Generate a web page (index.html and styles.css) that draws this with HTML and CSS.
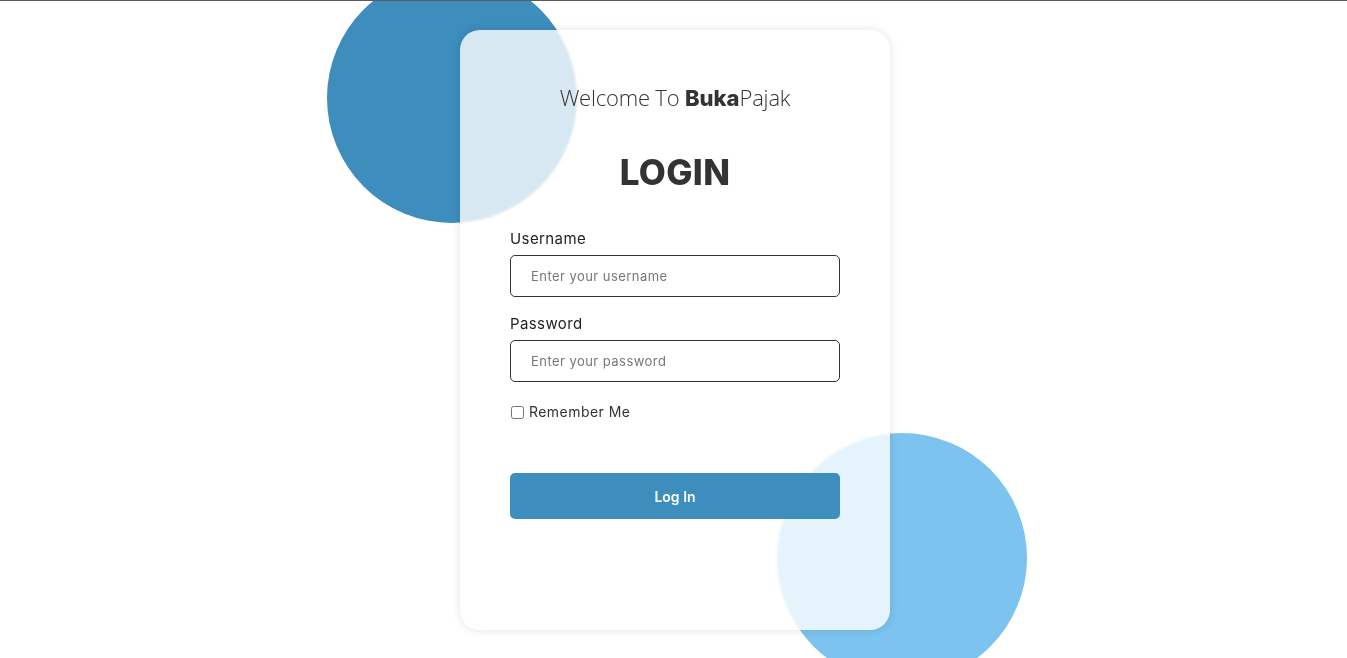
FILE: index.html
```html
<!DOCTYPE html>
<html lang="en">
<head>
<meta charset="utf-8">
<title>Login - BukaPajak</title>
<link rel="stylesheet" href="styles.css">
</head>
<body>
<main class="page">
  <div class="stage">
    <div class="circle circle-one"></div>
    <div class="circle circle-two"></div>
    <form class="card">
      <h3 class="welcome">Welcome To <span class="brand-bold">Buka</span>Pajak</h3>
      <h1 class="title">LOGIN</h1>
      <label class="label" for="username">Username</label>
      <input class="field" id="username" type="text" placeholder="Enter your username">
      <label class="label label-gap" for="password">Password</label>
      <input class="field" id="password" type="password" placeholder="Enter your password">
      <label class="remember"><input class="check" type="checkbox"> Remember Me</label>
      <button class="submit" type="button">Log In</button>
    </form>
  </div>
</main>
</body>
</html>
```
FILE: styles.css
```css
* { box-sizing: border-box; }
html, body { margin: 0; padding: 0; }
body {
  border-top: 1px solid #5c5c5c;
  background: #fff;
  font-family: "Inter", "Liberation Sans", sans-serif;
  color: #333;
  overflow: hidden;
  height: 658px;
}
.page {
  display: flex;
  justify-content: center;
  padding-top: 29px;
  padding-left: 3px;
}
.stage {
  position: relative;
  width: 430px;
}
.circle {
  position: absolute;
  width: 250px;
  height: 250px;
  border-radius: 50%;
  z-index: 0;
}
.circle-one { left: -133px; top: -57px; background: #3d8dbd; }
.circle-two { left: 317px; top: 403px; background: #7cc3ef; }
.card {
  position: relative;
  z-index: 1;
  width: 430px;
  height: 600px;
  padding: 52px 50px 0;
  border-radius: 20px;
  background: rgba(255, 255, 255, 0.8);
  backdrop-filter: blur(1px);
  box-shadow: 0 0 10px rgba(0, 0, 0, 0.12);
  display: flex;
  flex-direction: column;
}
.welcome {
  margin: 0;
  text-align: center;
  font-family: "Open Sans", "Liberation Sans", sans-serif;
  font-weight: 300;
  font-size: 22px;
  line-height: 30px;
  color: #333;
  letter-spacing: -0.2px;
}
.brand-bold {
  font-family: "Inter", sans-serif;
  font-weight: 800;
  letter-spacing: 0;
}
.title {
  margin: 37px 0 0;
  text-align: center;
  font-weight: 800;
  font-size: 35px;
  line-height: 44px;
  color: #333;
  letter-spacing: 0.3px;
}
.label {
  display: block;
  margin-top: 34px;
  font-size: 15px;
  line-height: 22px;
  letter-spacing: 0.4px;
  color: #222;
}
.label-gap { margin-top: 16px; }
.field {
  display: block;
  margin-top: 5px;
  width: 330px;
  height: 42px;
  padding: 0 20px;
  border: 1px solid #333;
  border-radius: 5px;
  font-family: inherit;
  font-size: 13px;
  letter-spacing: 0.45px;
  color: #333;
  background: transparent;
  outline: none;
}
.field::placeholder { color: #777; }
.remember {
  display: flex;
  align-items: center;
  gap: 5px;
  margin-top: 20px;
  font-size: 14px;
  line-height: 20px;
  letter-spacing: 0.45px;
  color: #333;
}
.check {
  margin: 0 0 0 1px;
  width: 13px;
  height: 13px;
}
.submit {
  margin-top: 51px;
  width: 330px;
  height: 46px;
  border: 0;
  border-radius: 5px;
  background: #3d8dbd;
  color: #fff;
  font-family: inherit;
  font-weight: 600;
  font-size: 14px;
}
```
